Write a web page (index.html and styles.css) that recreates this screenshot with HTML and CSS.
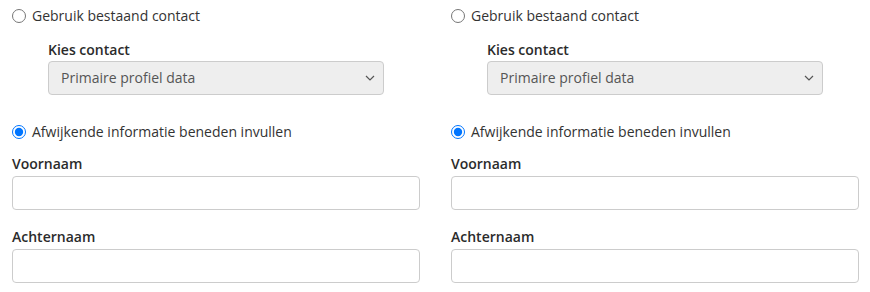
FILE: index.html
```html
<!DOCTYPE html>
<html lang="nl">
<head>
<meta charset="utf-8">
<title>Contact</title>
<link rel="stylesheet" href="styles.css">
</head>
<body>
<div class="grid">
  <div class="col">
    <label class="radio"><input type="radio" name="a"> <span>Gebruik bestaand contact</span></label>
    <div class="sub">
      <div class="lbl">Kies contact</div>
      <div class="selwrap">
        <select class="sel" disabled><option>Primaire profiel data</option></select>
        <svg class="chev" width="10" height="6" viewBox="0 0 10 6"><path d="M1 1 L5 5 L9 1" fill="none" stroke="#555" stroke-width="1.2"/></svg>
      </div>
    </div>
    <label class="radio r2"><input type="radio" name="a" checked> <span>Afwijkende informatie beneden invullen</span></label>
    <div class="lbl l1">Voornaam</div>
    <input class="inp" type="text">
    <div class="lbl l2">Achternaam</div>
    <input class="inp" type="text">
  </div>
  <div class="col">
    <label class="radio"><input type="radio" name="b"> <span>Gebruik bestaand contact</span></label>
    <div class="sub">
      <div class="lbl">Kies contact</div>
      <div class="selwrap">
        <select class="sel" disabled><option>Primaire profiel data</option></select>
        <svg class="chev" width="10" height="6" viewBox="0 0 10 6"><path d="M1 1 L5 5 L9 1" fill="none" stroke="#555" stroke-width="1.2"/></svg>
      </div>
    </div>
    <label class="radio r2"><input type="radio" name="b" checked> <span>Afwijkende informatie beneden invullen</span></label>
    <div class="lbl l1">Voornaam</div>
    <input class="inp" type="text">
    <div class="lbl l2">Achternaam</div>
    <input class="inp" type="text">
  </div>
</div>
</body>
</html>
```
FILE: styles.css
```css
html, body { margin: 0; padding: 0; background: #fff; }
body {
  font-family: "Open Sans", "Noto Sans", sans-serif;
  font-size: 14px;
  line-height: 20px;
  color: #333;
}
.grid {
  display: grid;
  grid-template-columns: 408px 408px;
  column-gap: 31px;
  padding: 6px 0 0 12px;
}
.col { display: flex; flex-direction: column; }
.radio {
  display: flex;
  align-items: center;
  height: 20px;
  gap: 6px;
}
.radio input {
  margin: 0;
  width: 14px;
  height: 14px;
  flex: none;
}
.sub { padding-left: 36px; margin-top: 14px; }
.lbl { font-weight: 600; height: 20px; color: #2b2b2b; }
.selwrap { position: relative; width: 336px; margin-top: 1px; }
.sel {
  -webkit-appearance: none;
  appearance: none;
  display: block;
  width: 100%;
  height: 34px;
  box-sizing: border-box;
  border: 1px solid #ccc;
  border-radius: 4px;
  background: #eee;
  color: #555;
  font: inherit;
  padding: 0 12px;
  opacity: 1;
}
.chev { position: absolute; right: 9px; top: 14px; }
.r2 { margin-top: 27px; }
.l1 { margin-top: 12px; }
.l2 { margin-top: 17px; }
.inp {
  display: block;
  margin: 2px 0 0;
  width: 408px;
  height: 34px;
  box-sizing: border-box;
  border: 1px solid #ccc;
  border-radius: 4px;
  background: #fff;
  font: inherit;
  padding: 0 12px;
}
```
